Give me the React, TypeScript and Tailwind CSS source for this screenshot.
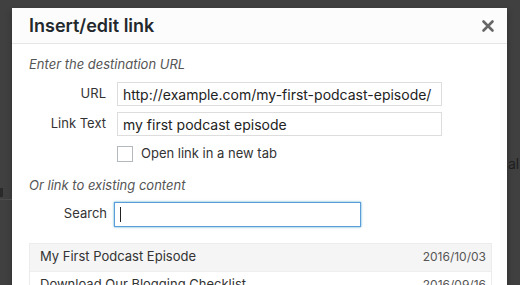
import React from "react";

export default function App() {
  const font = { fontFamily: 'Inter, "Noto Sans", "Liberation Sans", sans-serif' };
  return (
    <div className="relative h-[285px] w-[520px] overflow-hidden bg-[#404040]" style={font}>
      <div className="absolute left-0 top-[199px] h-px w-[12px] bg-[#4c4c4c]" />
      <div className="absolute left-0 top-[188px] h-[9px] w-[3px] bg-[#2a2a2a]" />
      <div className="absolute left-[508px] top-[153px] text-[14px] text-[#1e1e1e]">al</div>
      <div className="ml-[12px] mt-[8px] h-[300px] w-[495px] bg-white shadow-[0_3px_6px_rgba(0,0,0,0.3)]">
        <div className="flex h-[36px] items-center justify-between border-b border-[#e5e5e5] bg-[#fcfcfc] pl-[17px] pr-[11px]">
          <div className="text-[18px] font-semibold text-[#23282d]">Insert/edit link</div>
          <svg width="14" height="14" viewBox="0 0 14 14" className="mr-[1px]">
            <path d="M2.5 2.5 L11.5 11.5 M11.5 2.5 L2.5 11.5" stroke="#666" strokeWidth="2.6" strokeLinecap="round" />
          </svg>
        </div>
        <div className="pl-[17px] pr-[15px]">
          <div className="mt-[12px] text-[13px] italic text-[#555] leading-[16px]">Enter the destination URL</div>
          <div className="mt-[10px] grid grid-cols-[77px_325px] items-center gap-x-[11px] gap-y-[6px]">
            <div className="text-right text-[13px] text-[#333]">URL</div>
            <div className="flex h-[24px] items-center border border-[#ddd] bg-white px-[5px] text-[14px] text-[#222]">
              http://example.com/my-first-podcast-episode/
            </div>
            <div className="text-right text-[13px] text-[#333]">Link Text</div>
            <div className="flex h-[24px] items-center border border-[#ddd] bg-white px-[5px] text-[14px] text-[#222]">
              my first podcast episode
            </div>
            <div />
            <div className="mt-[2px] flex items-center gap-[8px]">
              <div className="h-[16px] w-[16px] border border-[#b4b9be] bg-white" />
              <div className="text-[13px] text-[#333]">Open link in a new tab</div>
            </div>
          </div>
          <div className="mt-[13px] text-[13px] italic text-[#555] leading-[16px]">Or link to existing content</div>
          <div className="mt-[9px] flex items-center">
            <div className="w-[78px] text-right text-[13px] text-[#333]">Search</div>
            <div className="ml-[7px] flex h-[25px] w-[247px] items-center border border-[#5b9dd9] bg-white px-[5px] shadow-[0_0_2px_rgba(30,140,190,0.8)]">
              <div className="h-[15px] w-px bg-[#222]" />
            </div>
          </div>
          <div className="mt-[16px] w-[463px] border border-[#ececec]">
            <div className="flex h-[27px] items-center justify-between bg-[#f5f5f5] pl-[10px] pr-[5px] text-[13px] text-[#333]">
              <span>My First Podcast Episode</span>
              <span className="text-[12px] text-[#555]">2016/10/03</span>
            </div>
            <div className="flex h-[27px] items-center justify-between border-t border-[#eee] bg-white pl-[10px] pr-[5px] text-[13px] text-[#333]">
              <span>Download Our Blogging Checklist</span>
              <span className="text-[12px] text-[#555]">2016/09/16</span>
            </div>
          </div>
        </div>
      </div>
    </div>
  );
}
